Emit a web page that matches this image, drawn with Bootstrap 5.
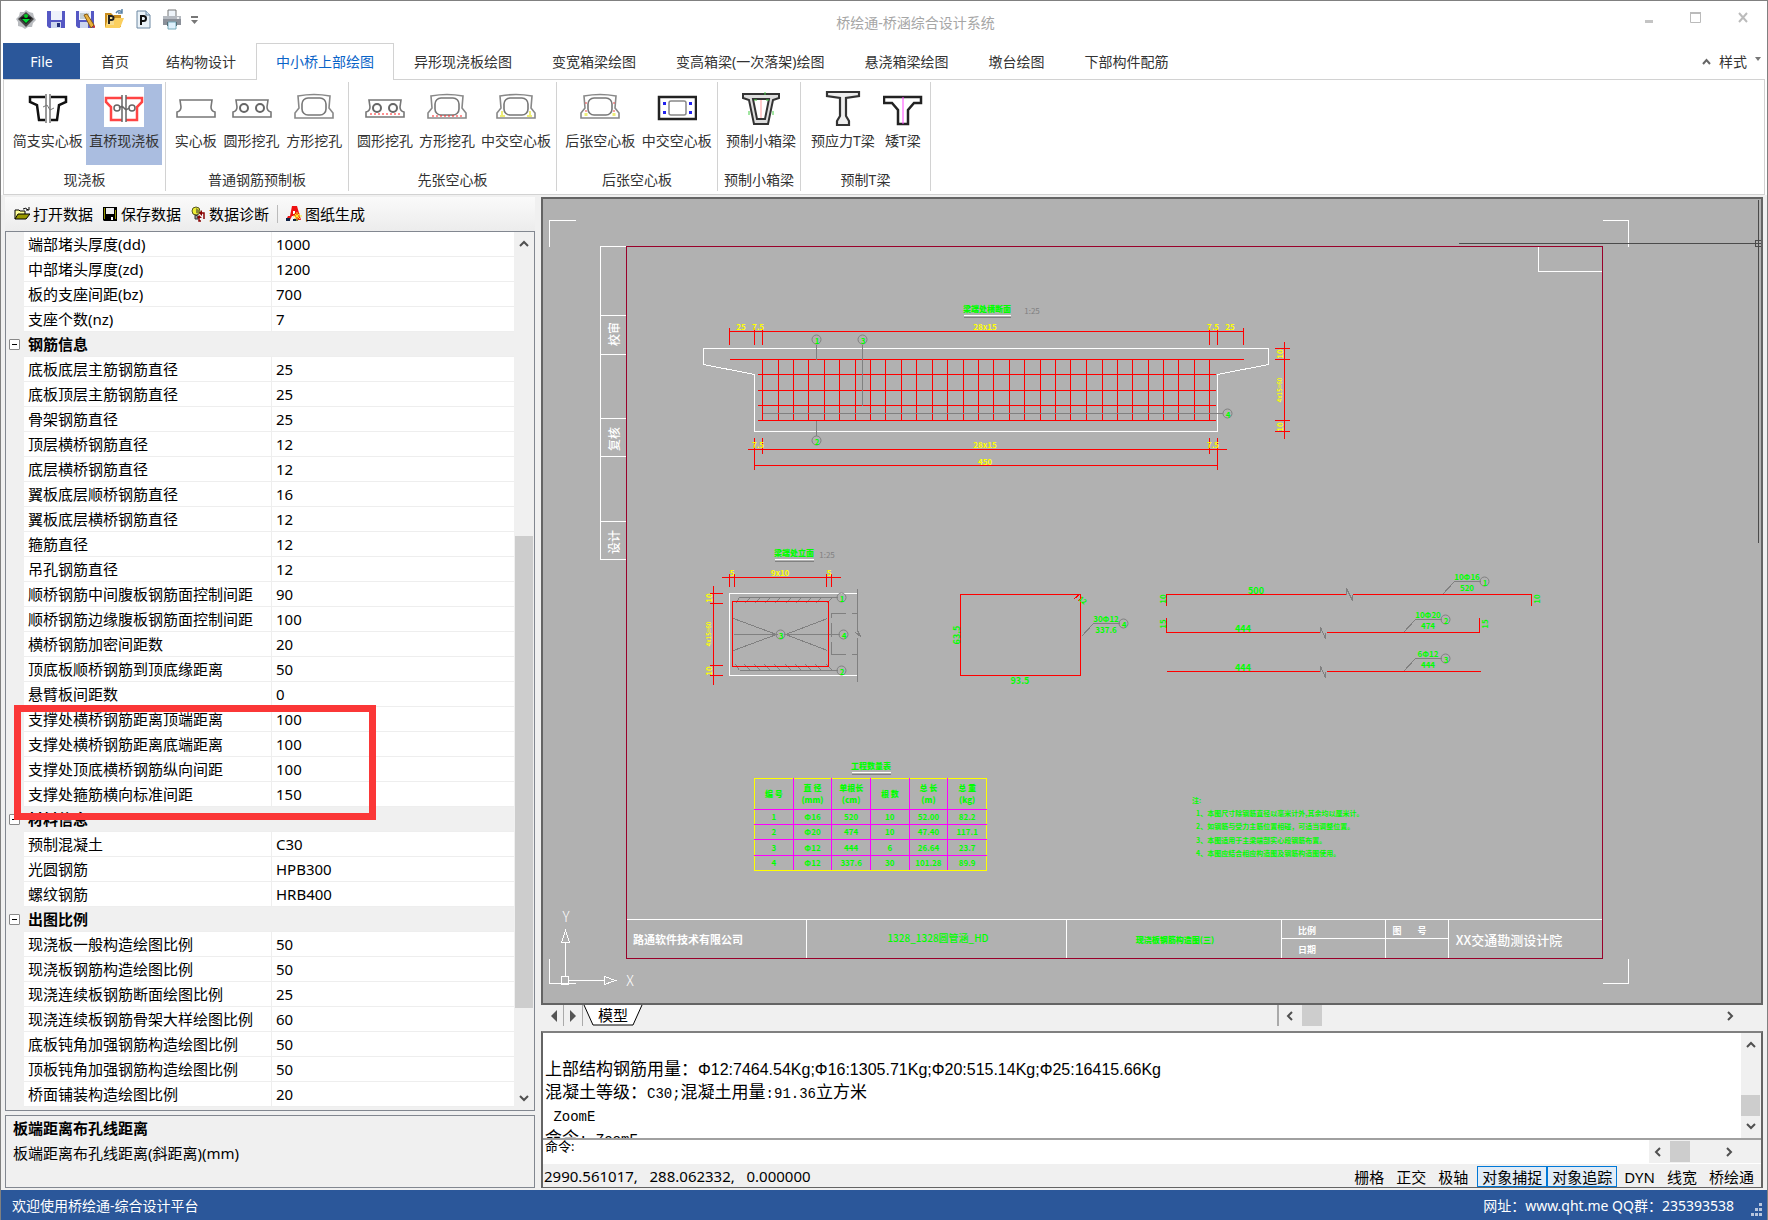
<!DOCTYPE html>
<html lang="zh-CN">
<head>
<meta charset="utf-8">
<meta name="viewport" content="width=device-width, initial-scale=1">
<title>桥绘通-桥涵综合设计系统</title>
<link rel="stylesheet" href="https://cdn.jsdelivr.net/npm/bootstrap@5.3.0/dist/css/bootstrap.min.css">
<style>
body{font:14px/20px "Noto Sans","Noto Sans CJK SC",sans-serif;color:#333;background:#fff}
button{font:inherit;color:inherit;background:none;border:0;padding:0;white-space:nowrap}
svg{display:block;flex:none}
.app-window{min-height:100vh;border:1px solid #808080;border-bottom:0}
.title-strip{height:42px}
.quick-tools{padding:6px 0 0 14px;gap:9px}
.app-title{color:#a6a6a6;padding:12px 0 0 67px}
.window-tools{gap:36px;padding:10px 18px 0 0}
.side-third{flex:1 1 0}
.ribbon-tabs{height:37px;padding:0 2px;position:relative}
.ribbon-tabs::after{content:"";position:absolute;left:2px;right:2px;bottom:0;border-bottom:1px solid #d2d2d2}
.ribbon-tabs button{height:37px;line-height:36px}
.file-tab{width:77px;background:#2b579a;color:#fff!important}
.ribbon-tab{padding:0 19px!important;border:1px solid transparent!important;border-bottom:0!important}
.home-tab{padding:0 16px 0 20px!important}
.ribbon-tab.is-open{color:#0a64c8;background:#fff;border-color:#d2d2d2!important;z-index:1}
.ribbon-body{margin:0 2px;height:115px;border:1px solid #d2d2d2;border-top:0;display:grid;grid-template-columns:162px 183px 208px 161px 83px 130px;padding-top:2px}
.ribbon-group{border-right:1px solid #d2d2d2;height:109px;padding-top:2px}
.ribbon-group .tools{height:81px;padding:0 2px 0 5px}
.ribbon-group .tool{height:81px;padding:3px 3px 0;display:flex;flex-direction:column;align-items:center}
.tool svg{margin:0 0 4px}
.tool.is-on{background:#aabde0}
.tool.is-on svg{background:#fff}
.group-name{text-align:center;padding-top:5px;white-space:nowrap}
.workspace{background:#f0f0f0;padding:2px 4px 2px 4px;gap:6px}
.data-side{flex:0 0 530px;color:#000;font-size:15px}
.data-tools{height:34px;background:linear-gradient(#fafafa,#ececec);padding-left:9px;gap:10px}
.data-tools button{color:#000;display:flex;align-items:center;gap:3px}
.bar-split{width:1px;height:18px;background:#bbb;margin:0 -2px}
.prop-frame{border:1px solid #828790;height:880px;position:relative}
.prop-table{width:100%;table-layout:fixed;border-collapse:separate;border-spacing:0;line-height:24px;align-self:flex-start}
.prop-table th,.prop-table td{height:25px;padding:0 0 0 4px;font-weight:400;white-space:nowrap;background:#fff;border-bottom:1px solid #eee}
.prop-table td{border-left:1px solid #eee}
.prop-table .gut{background:#f0f0f0;border:0;padding:0 0 0 3px}
.prop-table .cat{background:#f0f0f0;font-weight:700}
.fold{width:11px;height:11px;border:1px solid #888!important;background:#fff!important;display:flex!important;align-items:center;justify-content:center;border-radius:1px}
.fold::after{content:"";width:5px;height:1px;background:#000}
.v-scroll{width:20px;background:#f0f0f0;display:flex;flex-direction:column;align-items:center;justify-content:space-between;flex:none;position:relative}
.prop-thumb{position:absolute;left:1px;right:1px;top:304px;height:472px;background:#cdcdcd}
.mark-box{position:absolute;left:8px;top:473px;width:362px;height:115px;border:7px solid #fb3737}
.hint-box{border:1px solid #828790;margin-top:4px;flex:1;min-height:72px;padding:0 7px;line-height:25px}
.cad-side{min-width:0}
.cad-frame{border:2px solid #646464;background:#b1b1b1}
.cad-frame>svg{width:100%;height:auto}
.sheet-row{height:21px;background:#f0f0f0;color:#000;font-size:15px;line-height:21px}
.nav-arrow{width:19px;height:21px;border-right:1px solid #aaa!important;display:flex!important;align-items:center;justify-content:center}
.sheet-tab{position:relative;width:60px;height:21px}
.sheet-tab svg{position:absolute;left:0;top:0}
.sheet-tab span{position:relative}
.h-scroll{width:482px;border-left:2px solid #aaa;padding:0 24px 0 6px}
.h-thumb{width:20px;height:21px;background:#cdcdcd}
.cmd-frame{margin-top:5px;border:2px solid #646464;border-top-color:#808080;border-bottom-width:1px;color:#000;flex:1}
.cmd-log{height:105px;background:#fff;overflow:hidden}
.cmd-lines{font:17px/23px "Noto Sans CJK SC",sans-serif;padding:23px 0 0 2px;height:105px;overflow:hidden;white-space:pre}
.cmd-lines div{height:23px}
.cmd-lines .ar{font-family:"Liberation Sans",sans-serif;font-size:16px}
.cmd-lines .mo{font-family:"Liberation Mono",monospace;font-size:14px}
.log-thumb{position:absolute;left:0;right:1px;top:62px;height:21px;background:#cdcdcd}
.cmd-entry{height:25px;border-top:2px solid #a0a0a0;background:#fff;font-size:13px;line-height:13px;padding-left:2px}
.cmd-entry input{border:0;outline:0;height:22px;padding:0}
.small-scroll{width:92px;background:#f0f0f0;padding:0 7px 0 4px}
.mode-row{height:24px;padding:2px 4px 0 1px;background:#f0f0f0;font-size:15px;line-height:20px;border-top:1px solid #fff}
.mode-row button{height:21px;padding:0 2px;margin-right:6px;line-height:18px;border:1px solid transparent}
.mode-row button.is-on{background:#e1ecf7;border:1px solid #0078d7;padding:0 4px;margin-right:0}
.mode-row .first-after{margin-left:4px}
.status-strip{height:30px;background:#2b579a;color:#fff;padding:1px 5px 0 11px}
.ln{fill:none;stroke-width:1;shape-rendering:crispEdges}
.w{stroke:#fff}.r{stroke:#f00}.y{stroke:#ff0}.g{stroke:#808080}.k{stroke:#4b4b4b}.c{stroke:#99002a}
.tx text{text-anchor:middle;dominant-baseline:central;font-family:"Noto Sans CJK SC",sans-serif}
.fy{fill:#ff0;font-size:8px;font-weight:700}.fg{fill:#0f0;font-size:9px;font-weight:700}.fw{fill:#fff;font-size:12px;font-weight:500}.fd{fill:#808080;font-size:8px}
.tx .lft text{text-anchor:start}
.qty{width:233px;table-layout:fixed;border-collapse:collapse;border:1px solid #ff0;color:#0f0;font:700 8px/12px "Noto Sans CJK SC",sans-serif;text-align:center}
.qty td,.qty th{border:1px solid #f0f;padding:0;height:15px;line-height:12px}
.qty tr:first-child th{height:31px;border-top-color:#ff0;font-weight:900}
.qty tr:nth-child(4) td{height:16px}
.qty th:first-child,.qty td:first-child{border-left-color:#ff0}
.qty th:last-child,.qty td:last-child{border-right-color:#ff0}
.qty tr:last-child td{border-bottom-color:#ff0}
</style>
<script src="https://cdn.jsdelivr.net/npm/bootstrap@5.3.0/dist/js/bootstrap.bundle.min.js"></script>
</head>
<body>
<div class="app-window d-flex flex-column">

<header class="title-strip d-flex">
  <div class="quick-tools side-third d-flex">
    <svg width="22" height="24" viewBox="0 0 22 24"><path d="M11 3l3 2 4 1 1 4 2 3-3 3-1 4-4 0-3 2-3-2-4-1 0-4-2-3 3-3 1-4 4 0z" fill="#b9bcc0"/><path d="M11 5l8 7-8 8-8-8z" fill="#444"/><path d="M5 11q6-4 12 0l-6 6z" fill="#111"/><path d="M7 12h8l-4 4z" fill="#0d3"/><circle cx="11" cy="9" r="2" fill="#0c2"/></svg>
    <svg width="20" height="24" viewBox="0 0 20 24"><path d="M1 4h18v17H3l-2-2z" fill="#5558c4"/><path d="M5 4h11v9H5z" fill="#eef2fb"/><path d="M5 15h10v6H5z" fill="#cdd6ee"/><path d="M11 16h3v4h-3z" fill="#23307c"/></svg>
    <svg width="20" height="24" viewBox="0 0 20 24"><path d="M1 4h18v17H3l-2-2z" fill="#5558c4"/><path d="M4 4h12v9H4z" fill="#eef2fb"/><path d="M5 7h9M5 9h9M5 11h6" stroke="#9aa"/><path d="M5 15h8v6H5z" fill="#cdd6ee"/><path d="M9 8l3-1 7 11-3 3z" fill="#e8b13b" stroke="#8a5b12"/><path d="M17 20l3-2v3z" fill="#c33"/></svg>
    <svg width="20" height="24" viewBox="0 0 20 24"><path d="M1 6h6l2 2h8v12H1z" fill="#c98d1d"/><path d="M4 11h16l-4 10H1z" fill="#fbcf5e"/><path d="M3 8h7v10H3z" fill="#f7dc8e"/><path d="M5 17V9h2.500q2 0 2 2t-2 2H5" fill="none" stroke="#222" stroke-width="2"/><path d="M12 6q3-4 6-1M18 2v4h-4" fill="none" stroke="#5a83a8" stroke-width="1.500"/></svg>
    <svg width="20" height="24" viewBox="0 0 20 24"><path d="M4 4h9l4 4v13H4z" fill="#eaf2f8" stroke="#6c88a2"/><path d="M13 4v4h4" fill="#cfe0ee" stroke="#6c88a2"/><path d="M8 18V9h2.500q2.500 0 2.500 2.500T10.500 14H8" fill="none" stroke="#111" stroke-width="2"/></svg>
    <svg width="20" height="24" viewBox="0 0 20 24"><path d="M6 3h8v7H6z" fill="#eef4fa" stroke="#777"/><path d="M1 9h18v9H1z" fill="#8b9099"/><path d="M1 9h18v3H1z" fill="#b5bac1"/><path d="M5 15h10v4H5z" fill="#333"/><path d="M6 15h8v7H6z" fill="#dff1fd" stroke="#7ab"/><circle cx="16" cy="11" r="1" fill="#fff"/></svg>
    <svg width="7" height="24" viewBox="0 0 7 24"><path d="M0 9h7v2H0zM0 13h7l-3.500 4z" fill="#777"/></svg>
  </div>
  <div class="app-title">桥绘通-桥涵综合设计系统</div>
  <div class="window-tools side-third d-flex justify-content-end align-items-start">
    <button aria-label="最小化"><svg width="9" height="14"><path d="M0 9h8v3H0z" fill="#c4c4c4"/></svg></button>
    <button aria-label="最大化"><svg width="12" height="14"><path d="M.5 1.500h10v10H.5z" fill="none" stroke="#bbb"/><path d="M0 1h11v2H0z" fill="#bbb"/></svg></button>
    <button aria-label="关闭"><svg width="11" height="14"><path d="M1 2l8 9M9 2l-8 9" stroke="#bbb" stroke-width="2"/></svg></button>
  </div>
</header>

<nav class="ribbon-tabs d-flex">
  <button class="file-tab">File</button>
  <button class="ribbon-tab home-tab">首页</button>
  <button class="ribbon-tab">结构物设计</button>
  <button class="ribbon-tab is-open">中小桥上部绘图</button>
  <button class="ribbon-tab">异形现浇板绘图</button>
  <button class="ribbon-tab">变宽箱梁绘图</button>
  <button class="ribbon-tab">变高箱梁(一次落架)绘图</button>
  <button class="ribbon-tab">悬浇箱梁绘图</button>
  <button class="ribbon-tab">墩台绘图</button>
  <button class="ribbon-tab">下部构件配筋</button>
  <button class="ms-auto me-1 d-flex align-items-center gap-2">
    <svg width="9" height="8"><path d="M1 6l3.500-4L8 6" fill="none" stroke="#666" stroke-width="2"/></svg><span>样式</span>
    <svg width="6" height="14"><path d="M0 2h6L3 6z" fill="#777"/></svg></button>
</nav>

<section class="ribbon-body">
  <div class="ribbon-group">
    <div class="tools d-flex justify-content-evenly">
      <button class="tool"><svg width="40" height="40" viewBox="0 0 40 40"><path d="M17 10H2v5l7 3 2 15h6M23 10h15v5l-7 3-2 15h-6" fill="none" stroke="#111" stroke-width="2.500"/><path d="M18 7v29M22 7v29" stroke="#777" stroke-width="1.500"/><path d="M15 20l4-2 3 5 4-2" fill="none" stroke="#777"/></svg>简支实心板</button>
      <button class="tool is-on"><svg width="40" height="40" viewBox="0 0 40 40"><path d="M18 11H2v4l5 5v13h11M22 11h16v4l-5 5v13H22" fill="none" stroke="#f44" stroke-width="2.500"/><g fill="none" stroke="#666" stroke-width="1.500"><circle cx="13" cy="21" r="3"/><circle cx="28" cy="21" r="3"/><path d="M18 8v27M22 8v27M15 21l3-2 4 4 3-2"/></g></svg>直桥现浇板</button>
    </div><div class="group-name">现浇板</div>
  </div>
  <div class="ribbon-group">
    <div class="tools d-flex justify-content-evenly">
      <button class="tool"><svg width="40" height="40" viewBox="0 0 40 40"><path id="slab" d="M4 13h32l-1 7q0 4 4 5v5H1v-5q4-1 4-5z" fill="none" stroke="#777" stroke-width="1.600"/></svg>实心板</button>
      <button class="tool"><svg width="40" height="40" viewBox="0 0 40 40"><g id="round"><use href="#slab"/><g fill="none" stroke="#666" stroke-width="2"><circle cx="12" cy="21" r="4"/><circle cx="28" cy="21" r="4"/></g></g></svg>圆形挖孔</button>
      <button class="tool"><svg width="40" height="40" viewBox="0 0 40 40"><g id="square"><path d="M4 9q16-3 32 0l-1 12 4 5v5H1v-5l4-5z" fill="none" stroke="#888" stroke-width="1.600"/><rect x="8" y="11" width="24" height="17" rx="6" fill="none" stroke="#777" stroke-width="1.600"/></g></svg>方形挖孔</button>
    </div><div class="group-name">普通钢筋预制板</div>
  </div>
  <div class="ribbon-group">
    <div class="tools d-flex justify-content-evenly">
      <button class="tool"><svg width="40" height="40" viewBox="0 0 40 40"><use href="#round"/><path d="M5 27h31" stroke="#f22" stroke-width="1" stroke-dasharray="2 2"/></svg>圆形挖孔</button>
      <button class="tool"><svg width="40" height="40" viewBox="0 0 40 40"><use href="#square"/><path d="M5 29h31" stroke="#f22" stroke-width="1" stroke-dasharray="2 2"/></svg>方形挖孔</button>
      <button class="tool"><svg width="40" height="40" viewBox="0 0 40 40"><use href="#square"/><path d="M6 24v5M34 24v5M4 29h5M31 29h5" stroke="#ee7" stroke-width="2"/></svg>中交空心板</button>
    </div><div class="group-name">先张空心板</div>
  </div>
  <div class="ribbon-group">
    <div class="tools d-flex justify-content-evenly">
      <button class="tool"><svg width="40" height="40" viewBox="0 0 40 40"><use href="#square"/><path d="M6 15v2M34 15v2M6 23v2M34 23v2" stroke="#e44" stroke-width="1"/><path d="M6 26v3M34 26v3" stroke="#ee7" stroke-width="3"/></svg>后张空心板</button>
      <button class="tool"><svg width="40" height="40" viewBox="0 0 40 40"><rect x="2" y="10" width="37" height="22" fill="none" stroke="#222" stroke-width="2.500"/><rect x="12" y="14" width="17" height="14" rx="2" fill="none" stroke="#888" stroke-width="1.500"/><path d="M6 15h3v3H6zM6 24h3v3H6zM32 15h3v3h-3zM32 24h3v3h-3z" fill="#22e"/></svg>中交空心板</button>
    </div><div class="group-name">后张空心板</div>
  </div>
  <div class="ribbon-group">
    <div class="tools d-flex justify-content-evenly">
      <button class="tool"><svg width="40" height="40" viewBox="0 0 40 40"><path d="M2 7h36v4l-6 2-5 24H13L8 13l-6-2z" fill="#ddd" stroke="#333" stroke-width="2"/><path d="M12 12h16l-4 20h-8z" fill="#fff" stroke="#333" stroke-width="2"/><path d="M20 13v18" stroke="#f99"/><path d="M8 24v4M32 24v4M13 13h3M25 13h3M24 5v3" stroke="#4c4" stroke-width="1"/></svg>预制小箱梁</button>
    </div><div class="group-name">预制小箱梁</div>
  </div>
  <div class="ribbon-group">
    <div class="tools d-flex justify-content-evenly">
      <button class="tool"><svg width="40" height="40" viewBox="0 0 40 40"><path d="M4 5h32v4l-13 2v18l3 5v4H14v-4l3-5V11L4 9z" fill="#eee" stroke="#333" stroke-width="2.200"/></svg>预应力T梁</button>
      <button class="tool"><svg width="40" height="40" viewBox="0 0 40 40"><path d="M1 10h37v6h-7l-6 7v14H15V23l-6-7H1z" fill="#fff" stroke="#222" stroke-width="2.500"/><path d="M20 10v27" stroke="#f4f"/></svg>矮T梁</button>
    </div><div class="group-name">预制T梁</div>
  </div>
</section>

<main class="workspace d-flex flex-grow-1">
  <aside class="data-side d-flex flex-column">
    <div class="data-tools d-flex align-items-center">
      <button><svg width="16" height="16" viewBox="0 0 16 16"><path d="M1 13V4h4l1 1h5v3" fill="#ff9" stroke="#000"/><path d="M1 13l3-5h12l-4 5z" fill="#990" stroke="#000"/><path d="M9 3q3-2 5 1M15 1v3h-3" fill="none" stroke="#000"/></svg>打开数据</button>
      <button><svg width="15" height="16" viewBox="0 0 15 16"><path d="M0 1h14v14H1l-1-1z" fill="#000"/><path d="M3 2h8v6H3z" fill="#eee"/><path d="M1 2h1v11H1zM12 4h1v9h-1z" fill="#990"/><path d="M8 11h2v3H8z" fill="#fff"/></svg>保存数据</button>
      <button><svg width="15" height="16" viewBox="0 0 15 16"><circle cx="5" cy="5" r="4" fill="#ee3" stroke="#552"/><path d="M5 2l3 2v4L5 7z" fill="#883"/><path d="M4 9l3 1v3H4z" fill="#999" stroke="#333"/><path d="M11 7h2v6M10 15H8v-3" fill="none" stroke="#800" stroke-width="1.500"/><path d="M8 7l3-3v6zM6 12h5l-3-3z" fill="#800"/></svg>数据诊断</button>
      <div class="bar-split"></div>
      <button><svg width="16" height="16" viewBox="0 0 16 16"><path d="M6 0h5l4 14h-5l-1-4H6l-2 4H0l2-4h2z" fill="#e11"/><path d="M7 5h2v3H7z" fill="#fff"/><path d="M0 12h4v3H0zM7 13h5v2H7z" fill="#124"/><path d="M11 6v9M7 10h9M8 7l6 6M14 7l-6 6" stroke="#fe2" stroke-width="1"/></svg>图纸生成</button>
    </div>

    <div class="prop-frame d-flex">
      <table class="prop-table">
        <colgroup><col style="width:18px"><col style="width:247px"><col></colgroup>
        <tbody>
        <tr><td class="gut"></td><th>端部堵头厚度(dd)</th><td>1000</td></tr>
        <tr><td class="gut"></td><th>中部堵头厚度(zd)</th><td>1200</td></tr>
        <tr><td class="gut"></td><th>板的支座间距(bz)</th><td>700</td></tr>
        <tr><td class="gut"></td><th>支座个数(nz)</th><td>7</td></tr>
        <tr><td class="gut"><button class="fold" aria-label="折叠钢筋信息"></button></td><th class="cat" colspan="2">钢筋信息</th></tr>
        <tr><td class="gut"></td><th>底板底层主筋钢筋直径</th><td>25</td></tr>
        <tr><td class="gut"></td><th>底板顶层主筋钢筋直径</th><td>25</td></tr>
        <tr><td class="gut"></td><th>骨架钢筋直径</th><td>25</td></tr>
        <tr><td class="gut"></td><th>顶层横桥钢筋直径</th><td>12</td></tr>
        <tr><td class="gut"></td><th>底层横桥钢筋直径</th><td>12</td></tr>
        <tr><td class="gut"></td><th>翼板底层顺桥钢筋直径</th><td>16</td></tr>
        <tr><td class="gut"></td><th>翼板底层横桥钢筋直径</th><td>12</td></tr>
        <tr><td class="gut"></td><th>箍筋直径</th><td>12</td></tr>
        <tr><td class="gut"></td><th>吊孔钢筋直径</th><td>12</td></tr>
        <tr><td class="gut"></td><th>顺桥钢筋中间腹板钢筋面控制间距</th><td>90</td></tr>
        <tr><td class="gut"></td><th>顺桥钢筋边缘腹板钢筋面控制间距</th><td>100</td></tr>
        <tr><td class="gut"></td><th>横桥钢筋加密间距数</th><td>20</td></tr>
        <tr><td class="gut"></td><th>顶底板顺桥钢筋到顶底缘距离</th><td>50</td></tr>
        <tr><td class="gut"></td><th>悬臂板间距数</th><td>0</td></tr>
        <tr><td class="gut"></td><th>支撑处横桥钢筋距离顶端距离</th><td>100</td></tr>
        <tr><td class="gut"></td><th>支撑处横桥钢筋距离底端距离</th><td>100</td></tr>
        <tr><td class="gut"></td><th>支撑处顶底横桥钢筋纵向间距</th><td>100</td></tr>
        <tr><td class="gut"></td><th>支撑处箍筋横向标准间距</th><td>150</td></tr>
        <tr><td class="gut"><button class="fold" aria-label="折叠材料信息"></button></td><th class="cat" colspan="2">材料信息</th></tr>
        <tr><td class="gut"></td><th>预制混凝土</th><td>C30</td></tr>
        <tr><td class="gut"></td><th>光圆钢筋</th><td>HPB300</td></tr>
        <tr><td class="gut"></td><th>螺纹钢筋</th><td>HRB400</td></tr>
        <tr><td class="gut"><button class="fold" aria-label="折叠出图比例"></button></td><th class="cat" colspan="2">出图比例</th></tr>
        <tr><td class="gut"></td><th>现浇板一般构造绘图比例</th><td>50</td></tr>
        <tr><td class="gut"></td><th>现浇板钢筋构造绘图比例</th><td>50</td></tr>
        <tr><td class="gut"></td><th>现浇连续板钢筋断面绘图比例</th><td>25</td></tr>
        <tr><td class="gut"></td><th>现浇连续板钢筋骨架大样绘图比例</th><td>60</td></tr>
        <tr><td class="gut"></td><th>底板钝角加强钢筋构造绘图比例</th><td>50</td></tr>
        <tr><td class="gut"></td><th>顶板钝角加强钢筋构造绘图比例</th><td>50</td></tr>
        <tr><td class="gut"></td><th>桥面铺装构造绘图比例</th><td>20</td></tr>
        </tbody>
      </table>
      <div class="v-scroll py-2">
        <svg width="12" height="8"><path d="M2 6l4-4 4 4" fill="none" stroke="#505050" stroke-width="2"/></svg>
        <div class="prop-thumb"></div>
        <svg width="12" height="8"><path d="M2 2l4 4 4-4" fill="none" stroke="#505050" stroke-width="2"/></svg>
      </div>
      <div class="mark-box"></div>
    </div>
    <div class="hint-box"><div class="fw-bold">板端距离布孔线距离</div><div>板端距离布孔线距离(斜距离)(mm)</div></div>
  </aside>

  <section class="cad-side d-flex flex-column flex-grow-1">
    <div class="cad-frame">
    <svg viewBox="543 199 1218 804" role="img" aria-label="梁端处钢筋构造图">
      <g transform="translate(.5 .5)">
        <path class="ln w" d="M575 220H549V246M1602 220H1628V246M549 958V983H575M1628 958V983H1602M626 246H600V559H626M600 315H626M600 354H626M600 418H626M600 456H626M600 521H626M1538 246V271H1602M626 919H1602M806 919V958M1066 919V958M1281 919V958M1385 919V958M1448 919V958M1281 938H1448"/>
        <path class="ln c" d="M626 246H1602V958H626Z"/>
        <path class="ln k" d="M1458 243H1760M1758 199V542M1755 240h6v6h-6z"/>
        <!-- UCS marker -->
        <path class="ln w" d="M561 976h7v8h-7zM565 942V976M568 980H604M561 942h8l-4-12zM604 976v8l11-4z"/>
        <!-- cross section -->
        <path class="ln w" d="M703 348H1268V364L1217 374V431H754V374L703 364ZM963 315H1010"/>
        <path class="ln r" d="M729 359H1243M757 374H1215M757 390H1215M757 405H1215M757 420H1215M762 359V420M778 359V420M793 359V420M808 359V420M824 359V420M839 359V420M855 359V420M870 359V420M885 359V420M901 359V420M916 359V420M932 359V420M947 359V420M963 359V420M978 359V420M993 359V420M1009 359V420M1024 359V420M1040 359V420M1055 359V420M1070 359V420M1086 359V420M1102 359V420M1117 359V420M1132 359V420M1148 359V420M1163 359V420M1178 359V420M1194 359V420M1209 359V420"/>
        <path class="ln r" d="M729 331H1243M729 327V344M754 327V344M762 327V344M1209 327V344M1217 327V344M1243 327V344M747 449H1226M754 465H1217M754 437V469M762 437V453M1209 437V453M1217 437V469M1284 341V438M1274 348H1289M1274 359H1289M1274 420H1289M1274 431H1289"/>
        <path class="ln g" d="M963 317H1010M762 413H1222M816 344V359M862 344V405M816 420V435"/>
        <g class="g" fill="none"><circle cx="816" cy="339" r="4.500"/><circle cx="862" cy="339" r="4.500"/><circle cx="816" cy="440" r="4.500"/><circle cx="1227" cy="413" r="4.500"/></g>
        <!-- elevation -->
        <path class="ln w" d="M857 593H729V675H857M774 559H813"/>
        <path class="ln g" d="M774 561H813M857 588V630L860 636L855 632M857 637V681M739 597H837M739 670H837M739 597l-4 6M750 597l-6 6M760 597l-6 6M770 597l-6 6M780 597l-6 6M791 597l-6 6M801 597l-6 6M811 597l-6 6M821 597l-6 6M832 597l-6 6M739 670l-4-6M750 670l-6-6M760 670l-6-6M770 670l-6-6M780 670l-6-6M791 670l-6-6M801 670l-6-6M811 670l-6-6M821 670l-6-6M832 670l-6-6M733 618L776 634L733 650M827 618L785 634L827 650M733 634H776M785 634H839M831 617V613H845M851 613H857M831 622V636M831 641V654H845M851 654H857"/>
        <path class="ln r" d="M732 601H828V666H732ZM721 577H840M729 573V586M734 573V586M826 573V586M831 573V586M713 585V684M709 593H722M709 603H722M709 665H722M709 675H722"/>
        <g class="g" fill="none"><circle cx="780" cy="634" r="4.500"/><circle cx="843" cy="634" r="4.500"/><circle cx="841" cy="597" r="4.500"/><circle cx="841" cy="670" r="4.500"/></g>
        <!-- bar details -->
        <path class="ln r" d="M960 594H1080V675H960ZM1074 598l5-4M1077 601l4-4M1166 605V594H1346M1352 594H1531V605M1166 617V632H1320M1326 632H1479V617M1166 671H1320M1326 671H1480"/>
        <path class="ln g" d="M1081 636L1093 623H1119M1442 594L1454 581H1480M1403 632L1415 619H1441M1403 671L1415 658H1441M1346 594V588L1352 600V594M1320 632V627L1325 638V632M1320 671V666L1325 677V671M851 774H890"/>
        <path class="ln w" d="M851 772H890"/>
        <g class="g" fill="none"><circle cx="1123" cy="623" r="4.500"/><circle cx="1484" cy="581" r="4.500"/><circle cx="1445" cy="619" r="4.500"/><circle cx="1445" cy="658" r="4.500"/></g>
      </g>
      <g class="tx">
        <g class="fy">
          <text x="741" y="326">25</text><text x="758" y="326">7.5</text><text x="985" y="326">28x15</text><text x="1213" y="326">7.5</text><text x="1230" y="326">25</text>
          <text x="758" y="444">7.5</text><text x="985" y="444">28x15</text><text x="1213" y="444">7.5</text><text x="985" y="461">450</text>
          <text transform="translate(1279 354) rotate(-90)">10</text><text transform="translate(1279 390) rotate(-90)" font-size="6">4x15=60</text><text transform="translate(1279 427) rotate(-90)">10</text>
          <text x="732" y="572">5</text><text x="780" y="572">9x10</text><text x="829" y="572">5</text>
          <text transform="translate(708 598) rotate(-90)">10</text><text transform="translate(708 634) rotate(-90)" font-size="6">4x15=60</text><text transform="translate(708 671) rotate(-90)">10</text>
        </g>
        <g class="fd"><text x="1032" y="310">1:25</text><text x="827" y="554">1:25</text></g>
        <g class="fg">
          <text x="987" y="308" font-weight="900" font-size="8">梁端处横断面</text><text x="794" y="552" font-weight="900" font-size="8">梁端处立面</text><text x="871" y="765" font-weight="900" font-size="8">工程数量表</text>
          <g font-size="8">
          <text x="817" y="340">1</text><text x="863" y="340">3</text><text x="817" y="441">2</text><text x="1228" y="414">4</text>
          <text x="781" y="635">3</text><text x="844" y="635">4</text><text x="842" y="598">1</text><text x="842" y="671">2</text>
          <text x="1124" y="624">4</text><text x="1485" y="582">1</text><text x="1446" y="620">2</text><text x="1446" y="659">3</text>
          <text x="1106" y="618">30Φ12</text><text x="1106" y="629">337.6</text>
          <text x="1467" y="576">10Φ16</text><text x="1467" y="587">520</text>
          <text x="1428" y="614">10Φ20</text><text x="1428" y="625">474</text>
          <text x="1428" y="653">6Φ12</text><text x="1428" y="664">444</text>
          </g>
          <text transform="translate(956 635) rotate(-90)">63.5</text><text x="1020" y="680">93.5</text><text transform="translate(1083 600) rotate(40)" font-size="7">12</text>
          <text x="1256" y="590">500</text><text transform="translate(1162 599) rotate(-90)" font-size="8">10</text><text transform="translate(1536 599) rotate(-90)" font-size="8">10</text>
          <text x="1243" y="628">444</text><text transform="translate(1162 624) rotate(-90)" font-size="8">15</text><text transform="translate(1484 624) rotate(-90)" font-size="8">15</text>
          <text x="1243" y="667">444</text>
        </g>
        <g class="lft" fill="#0f0" font-size="7" font-weight="700">
          <text x="1192" y="800">注:</text>
          <text x="1196" y="813">1、本图尺寸除钢筋直径以毫米计外,其余均以厘米计。</text>
          <text x="1196" y="826">2、如钢筋与受力主筋位置相碰，可适当调整位置。</text>
          <text x="1196" y="840">3、本图适用于主梁端部实心段钢筋布置。</text>
          <text x="1196" y="853">4、本图应结合相应构造图及钢筋构造图使用。</text>
        </g>
        <g class="fw">
          <text transform="translate(613 334) rotate(-90)">校审</text><text transform="translate(613 439) rotate(-90)">复核</text><text transform="translate(613 542) rotate(-90)">设计</text>
          <text x="688" y="939" font-size="11" font-weight="700">路通软件技术有限公司</text>
          <g font-size="9" font-weight="700"><text x="1307" y="930">比例</text><text x="1307" y="949">日期</text><text x="1397" y="930">图</text><text x="1422" y="930">号</text></g>
          <text x="1509" y="939" font-size="13">XX交通勘测设计院</text>
          <text x="566" y="916" font-size="14" font-weight="300">Y</text><text x="630" y="980" font-size="14" font-weight="300">X</text>
        </g>
        <g fill="#0f0"><text x="938" y="937" font-size="10" font-weight="500">1328_1328圆管涵_HD</text><text x="1175" y="939" font-size="8" font-weight="900">现浇板钢筋构造图(三)</text></g>
      </g>
      <foreignObject x="754" y="778" width="234" height="96">
        <table class="qty">
          <tr><th>编 号</th><th>直 径<br>(mm)</th><th>单根长<br>(cm)</th><th>根 数</th><th>总 长<br>(m)</th><th>总 重<br>(kg)</th></tr>
          <tr><td>1</td><td>Φ16</td><td>520</td><td>10</td><td>52.00</td><td>82.2</td></tr>
          <tr><td>2</td><td>Φ20</td><td>474</td><td>10</td><td>47.40</td><td>117.1</td></tr>
          <tr><td>3</td><td>Φ12</td><td>444</td><td>6</td><td>26.64</td><td>23.7</td></tr>
          <tr><td>4</td><td>Φ12</td><td>337.6</td><td>30</td><td>101.28</td><td>89.9</td></tr>
        </table>
      </foreignObject>
    </svg>
    </div>

    <div class="sheet-row d-flex">
      <button class="nav-arrow ms-1" aria-label="上一页"><svg width="6" height="12"><path d="M6 0v12L0 6z" fill="#555"/></svg></button>
      <button class="nav-arrow" aria-label="下一页"><svg width="6" height="12"><path d="M0 0v12l6-6z" fill="#555"/></svg></button>
      <button class="sheet-tab"><svg width="60" height="21"><path d="M1 0l9 20h40l9-20z" fill="#fff"/><path d="M1 0l9 20h40l9-20" fill="none" stroke="#000"/></svg><span>模型</span></button>
      <div class="h-scroll ms-auto me-1 d-flex align-items-center">
        <svg width="9" height="12"><path d="M7 2L3 6l4 4" fill="none" stroke="#505050" stroke-width="2"/></svg>
        <div class="h-thumb ms-2"></div>
        <svg class="ms-auto" width="9" height="12"><path d="M2 2l4 4-4 4" fill="none" stroke="#505050" stroke-width="2"/></svg>
      </div>
    </div>

    <div class="cmd-frame d-flex flex-column">
      <div class="cmd-log d-flex">
        <div class="cmd-lines flex-grow-1"><div>上部结构钢筋用量：<span class="ar">Φ12:7464.54Kg;Φ16:1305.71Kg;Φ20:515.14Kg;Φ25:16415.66Kg</span></div><div>混凝土等级：<span class="mo">C30;</span>混凝土用量<span class="mo">:91.36</span>立方米</div><div><span class="mo"> ZoomE</span></div><div>命令<span class="mo">: ZoomE</span></div></div>
        <div class="v-scroll py-2">
          <svg width="12" height="8"><path d="M2 6l4-4 4 4" fill="none" stroke="#505050" stroke-width="2"/></svg>
          <div class="log-thumb"></div>
          <svg width="12" height="8"><path d="M2 2l4 4 4-4" fill="none" stroke="#505050" stroke-width="2"/></svg>
        </div>
      </div>
      <div class="cmd-entry d-flex">
        <label for="cmd">命令:</label><input id="cmd" class="flex-grow-1" type="text" autocomplete="off">
        <div class="small-scroll d-flex align-items-center">
          <svg width="9" height="12"><path d="M7 2L3 6l4 4" fill="none" stroke="#505050" stroke-width="2"/></svg>
          <div class="h-thumb ms-2"></div>
          <svg class="ms-auto" width="9" height="12"><path d="M2 2l4 4-4 4" fill="none" stroke="#505050" stroke-width="2"/></svg>
        </div>
        <div class="v-scroll"></div>
      </div>
      <div class="mode-row d-flex">
        <div class="me-auto">2990.561017,&nbsp;&nbsp; 288.062332,&nbsp;&nbsp; 0.000000</div>
        <button>栅格</button><button>正交</button><button>极轴</button>
        <button class="is-on">对象捕捉</button><button class="is-on">对象追踪</button>
        <button class="first-after">DYN</button><button>线宽</button><button class="me-0">桥绘通</button>
      </div>
    </div>
  </section>
</main>

<footer class="status-strip d-flex align-items-center">
  <div class="me-auto">欢迎使用桥绘通-综合设计平台</div>
  <div>网址：www.qht.me QQ群：235393538</div>
  <svg class="ms-3" width="12" height="20"><path d="M9 7h3v3H9zM9 12h3v3H9zM9 17h3v3H9zM5 12h3v3H5zM5 17h3v3H5zM1 17h3v3H1z" fill="#b8c6de"/></svg>
</footer>
</div>
</body>
</html>
